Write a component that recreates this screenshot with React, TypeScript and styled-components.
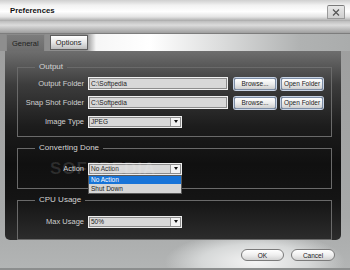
import styled, { createGlobalStyle } from 'styled-components';

const GlobalStyle = createGlobalStyle`
  html, body {
    margin: 0;
    padding: 0;
    background: #adafaf;
  }
  body {
    font-family: "Liberation Sans", Arial, sans-serif;
  }
`;

const StyledWindow = styled.div`
  position: relative;
  width: 350px;
  height: 270px;
  overflow: hidden;
  display: flex;
  flex-direction: column;
  background: linear-gradient(to bottom, #9c9c9c 0%, #a7a9a9 80%, #b3b5b5 100%);
`;

const StyledTitleBar = styled.div`
  flex: none;
  height: 21px;
  display: flex;
  align-items: center;
  justify-content: space-between;
  padding: 0 5px 0 10px;
  background: linear-gradient(to bottom, #cfcfcf 0%, #f2f2f2 25%, #ffffff 55%, #e4e4e4 80%, #a8a8a8 100%);

  h1 {
    margin: 0;
    font-size: 7.8px;
    font-weight: bold;
    color: #111;
  }
`;

const StyledClose = styled.div`
  width: 16px;
  height: 12px;
  margin-top: 3px;
  display: flex;
  align-items: center;
  justify-content: center;
  border: 1px solid #9a9a9a;
  border-top-color: #7a7a7a;
  border-radius: 2px 2px 0 0;
  background: linear-gradient(to bottom, #e8e8e8, #cfcfcf);
`;

const StyledBand = styled.div`
  flex: none;
  height: 12px;
  background: linear-gradient(to bottom, #bdbdbd 0%, #dcdcdc 35%, #c4c4c4 60%, #9e9e9e 100%);
`;

const StyledTabStrip = styled.div`
  flex: none;
  height: 18px;
  display: flex;
  align-items: flex-end;
  gap: 5px;
  padding-left: 6px;
  border-top: 1px solid #7d7d7d;
  box-sizing: border-box;
  background: linear-gradient(to right, #8e8e8e 0px, #8e8e8e 86px, #f6f6f6 96px, #ffffff 150px, #dcdddd 220px, #b0b2b2 300px, #aaacac 100%);
`;

type TabProps = {
  active?: boolean
};

const StyledTab = styled.div<TabProps>`
  box-sizing: border-box;
  height: ${p => (p.active ? '17px' : '15px')};
  margin-bottom: ${p => (p.active ? '0' : '1px')};
  padding: 0 5px;
  display: flex;
  align-items: center;
  font-size: 7.5px;
  color: #1e1e1e;
  border: 1px solid ${p => (p.active ? '#8a8a8a' : '#5e5e5e')};
  border-bottom: ${p => (p.active ? 'none' : '1px solid #5e5e5e')};
  background: ${p => (p.active
    ? 'linear-gradient(to bottom, #7c7c7c, #6c6c6c)'
    : 'linear-gradient(to bottom, #ffffff 0%, #e6e6e6 50%, #bcbcbc 100%)')};
`;

const StyledBody = styled.div`
  flex: none;
  height: 189px;
  display: flex;
  padding: 0 9px 0 5px;
`;

const StyledPanel = styled.div`
  position: relative;
  flex: 1;
  box-sizing: border-box;
  padding: 11px 9px 3px 12px;
  display: flex;
  flex-direction: column;
  gap: 6px;
  border-radius: 0 0 5px 5px;
  background: linear-gradient(to bottom, #6e6e6e 0%, #3c3c3c 18%, #1c1c1c 40%, #101010 60%, #141414 78%, #2c2c2c 100%);
`;

type GroupProps = {
  pad: string
};

const StyledGroup = styled.fieldset<GroupProps>`
  margin: 0;
  padding: ${p => p.pad};
  min-width: 0;
  border: 1px solid #6a6a6a;
  display: flex;
  flex-direction: column;
  gap: 6px;

  legend {
    margin-left: 17px;
    padding: 0 4px;
    font-size: 8px;
    line-height: 10px;
    color: #d4d4d4;
  }
`;

const StyledRow = styled.div`
  display: flex;
  align-items: center;
  height: 13px;
`;

const StyledLabel = styled.div`
  width: 66px;
  margin-right: 4px;
  text-align: right;
  font-size: 7.5px;
  color: #d0d0d0;
`;

const StyledInput = styled.div`
  box-sizing: border-box;
  width: 140px;
  height: 13px;
  padding-left: 2px;
  display: flex;
  align-items: center;
  font-size: 6.5px;
  color: #222;
  background: #d8d8d8;
  border: 1px solid #f0f0f0;
  outline: 1px solid #8c8c8c;
  outline-offset: -2px;
`;

const StyledButton = styled.div`
  box-sizing: border-box;
  width: 42px;
  height: 12px;
  margin-left: 6px;
  display: flex;
  align-items: center;
  justify-content: center;
  font-size: 6.5px;
  color: #222;
  border: 1px solid #7e8ea6;
  border-radius: 2px;
  background: linear-gradient(to bottom, #ffffff 0%, #ececec 50%, #cfcfcf 100%);
  box-shadow: 0 0 0 1px #c8d4e6;

  & + & {
    margin-left: 5px;
  }
`;

const StyledSelectWrap = styled.div`
  position: relative;
`;

const StyledSelect = styled.div`
  box-sizing: border-box;
  width: 94px;
  height: 12px;
  padding-left: 2px;
  display: flex;
  align-items: center;
  justify-content: space-between;
  font-size: 6.5px;
  color: #222;
  background: #d8d8d8;
  border: 1px solid #eeeeee;
  outline: 1px solid #8c8c8c;
  outline-offset: -2px;

  span {
    width: 9px;
    height: 8px;
    margin-right: 1px;
    display: flex;
    align-items: center;
    justify-content: center;
    background: #f2f2f2;
    border-left: 1px solid #9a9a9a;
  }

  span::after {
    content: '';
    border-left: 2.5px solid transparent;
    border-right: 2.5px solid transparent;
    border-top: 3px solid #111;
  }
`;

const StyledList = styled.div`
  position: absolute;
  z-index: 2;
  left: 0;
  top: 12px;
  width: 94px;
  box-sizing: border-box;
  border: 1px solid #5a5a5a;
  background: #d6d6d6;
`;

type OptionProps = {
  selected?: boolean
};

const StyledOption = styled.div<OptionProps>`
  height: 8.5px;
  padding-left: 2px;
  display: flex;
  align-items: center;
  font-size: 6.5px;
  color: ${p => (p.selected ? '#ffffff' : '#222')};
  background: ${p => (p.selected ? '#1874d8' : 'transparent')};
`;

const StyledWatermark = styled.div`
  position: absolute;
  z-index: 3;
  left: 45px;
  top: 108px;
  font-size: 17px;
  font-weight: bold;
  letter-spacing: 1px;
  color: rgba(255, 255, 255, 0.12);
  pointer-events: none;
`;

const StyledFooter = styled.div`
  flex: 1;
  display: flex;
  justify-content: flex-end;
  align-items: flex-start;
  gap: 7px;
  padding: 9px 15px 0 0;
  border-bottom: 2px solid #8c8e8e;
  background: radial-gradient(ellipse 90px 30px at 255px 22px, #f4f4f4 0%, #d6d8d8 60%, rgba(180, 182, 182, 0) 100%);
`;

type PillProps = {
  w: number
};

const StyledPill = styled.div<PillProps>`
  box-sizing: border-box;
  width: ${p => p.w}px;
  height: 12px;
  display: flex;
  align-items: center;
  justify-content: center;
  font-size: 6.5px;
  color: #222;
  border: 1px solid #7a7a7a;
  border-radius: 6px;
  background: linear-gradient(to bottom, #ffffff 0%, #efefef 50%, #d2d2d2 100%);
`;

function FolderRow({ label, value }: { label: string, value: string }) {
  return (
    <StyledRow>
      <StyledLabel>{label}</StyledLabel>
      <StyledInput>{value}</StyledInput>
      <StyledButton>{'Browse...'}</StyledButton>
      <StyledButton>{'Open Folder'}</StyledButton>
    </StyledRow>
  );
}

export default function App() {
  return (
    <StyledWindow>
      <GlobalStyle />
      <StyledTitleBar>
        <h1>{'Preferences'}</h1>
        <StyledClose>
          <svg width="8" height="7" viewBox="0 0 8 7">
            <path d="M1 0.5 L7 6.5 M7 0.5 L1 6.5" stroke="#555" strokeWidth="1.2" />
          </svg>
        </StyledClose>
      </StyledTitleBar>
      <StyledBand />
      <StyledTabStrip>
        <StyledTab active>{'General'}</StyledTab>
        <StyledTab>{'Options'}</StyledTab>
      </StyledTabStrip>
      <StyledBody>
        <StyledPanel>
          <StyledGroup pad="5px 0 8px 0">
            <legend>{'Output'}</legend>
            <FolderRow label="Output Folder" value="C:\Softpedia" />
            <FolderRow label="Snap Shot Folder" value="C:\Softpedia" />
            <StyledRow>
              <StyledLabel>{'Image Type'}</StyledLabel>
              <StyledSelect>{'JPEG'}<span /></StyledSelect>
            </StyledRow>
          </StyledGroup>
          <StyledGroup pad="9px 0 13px 0">
            <legend>{'Converting Done'}</legend>
            <StyledRow>
              <StyledLabel>{'Action'}</StyledLabel>
              <StyledSelectWrap>
                <StyledSelect>{'No Action'}<span /></StyledSelect>
                <StyledList>
                  <StyledOption selected>{'No Action'}</StyledOption>
                  <StyledOption>{'Shut Down'}</StyledOption>
                </StyledList>
              </StyledSelectWrap>
            </StyledRow>
          </StyledGroup>
          <StyledGroup pad="10px 0 11px 0">
            <legend>{'CPU Usage'}</legend>
            <StyledRow>
              <StyledLabel>{'Max Usage'}</StyledLabel>
              <StyledSelect>{'50%'}<span /></StyledSelect>
            </StyledRow>
          </StyledGroup>
          <StyledWatermark>{'SOFTPEDIA'}</StyledWatermark>
        </StyledPanel>
      </StyledBody>
      <StyledFooter>
        <StyledPill w={43}>{'OK'}</StyledPill>
        <StyledPill w={44}>{'Cancel'}</StyledPill>
      </StyledFooter>
    </StyledWindow>
  );
}
